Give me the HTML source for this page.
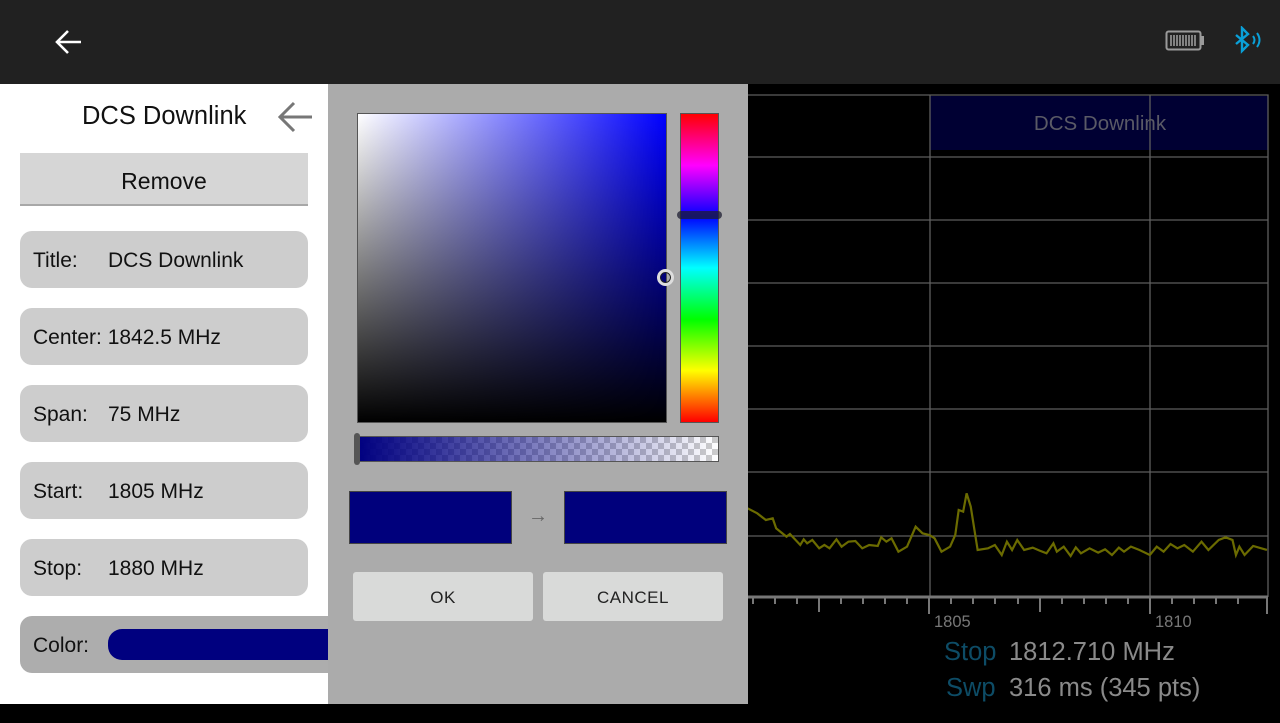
<!DOCTYPE html>
<html><head><meta charset="utf-8"><style>
*{margin:0;padding:0;box-sizing:border-box}
body{width:1280px;height:723px;background:#000;position:relative;overflow:hidden;font-family:"Liberation Sans",Roboto,sans-serif}
.abs{position:absolute}
.row{position:absolute;left:20px;width:288px;height:57px;background:#cdcdcd;border-radius:12px;font-size:21px;color:#111;line-height:59px}
.row .l{position:absolute;left:13px}
.row .v{position:absolute;left:88px}
.btn{position:absolute;background:#d9dad9;border-radius:3px;font-size:17px;color:#222;text-align:center;line-height:52px;letter-spacing:.5px}
</style></head><body>
<div class="abs" style="left:0;top:0;width:1280px;height:84px;background:#212121"></div>
<svg class="abs" style="left:50px;top:24px" width="36" height="36" viewBox="0 0 36 36"><path d="M7 18H31M18 7L7 18L18 29" stroke="#fff" stroke-width="2.6" fill="none"/></svg>
<svg class="abs" style="left:1160px;top:26px" width="110" height="32" viewBox="0 0 110 32">
<rect x="6.5" y="5.5" width="34" height="18" rx="2" fill="none" stroke="#9a9a9a" stroke-width="2"/><rect x="41" y="10" width="3" height="9" fill="#9a9a9a"/>
<g stroke="#9a9a9a" stroke-width="1.6"><path d="M11 9v11M14 9v11M17 9v11M20 9v11M23 9v11M26 9v11M29 9v11M32 9v11M35 9v11"/></g>
<path d="M76 9L88 19L82 25V2L88 8L76 18" stroke="#0aa0d8" stroke-width="2.4" fill="none"/>
<path d="M93 10q3 4 0 8M97 7q5 7 0 14" stroke="#0aa0d8" stroke-width="2" fill="none"/>
</svg>
<!-- left panel -->
<div class="abs" style="left:0;top:84px;width:328px;height:620px;background:#fff"></div>
<div class="abs" style="left:82px;top:102px;font-size:25.5px;color:#111">DCS Downlink</div>
<svg class="abs" style="left:276px;top:98px" width="38" height="38" viewBox="0 0 38 38"><path d="M4 19H36M18 5L4 19L18 33" stroke="#777" stroke-width="3" fill="none"/></svg>
<div class="abs" style="left:20px;top:153px;width:288px;height:53px;background:#d6d6d6;border-bottom:2px solid #a8a8a8;font-size:23px;text-align:center;line-height:56px;color:#111">Remove</div>
<div class="row" style="top:231px"><span class="l">Title:</span><span class="v">DCS Downlink</span></div>
<div class="row" style="top:308px"><span class="l">Center: 1842.5 MHz</span></div>
<div class="row" style="top:385px"><span class="l">Span:</span><span class="v">75 MHz</span></div>
<div class="row" style="top:462px"><span class="l">Start:</span><span class="v">1805 MHz</span></div>
<div class="row" style="top:539px"><span class="l">Stop:</span><span class="v">1880 MHz</span></div>
<div class="row" style="top:616px;background:#adadad;width:320px;border-radius:12px 0 0 12px"><span class="l">Color:</span><span class="abs" style="left:88px;top:13px;width:240px;height:31px;background:#00007f;border-radius:14px 0 0 14px"></span></div>
<!-- chart -->
<svg class="abs" style="left:748px;top:84px" width="532" height="620" viewBox="748 84 532 620">
<rect x="930" y="96" width="338" height="54" fill="#000033"/>
<text x="1100" y="130" text-anchor="middle" font-size="20.5" fill="#5a5a66" font-family="Liberation Sans,sans-serif">DCS Downlink</text>
<g stroke="#5e5e5e" stroke-width="1.3" fill="none">
<path d="M748 95H1268V597M748 157H1268M748 220H1268M748 283H1268M748 346H1268M748 409H1268M748 472H1268M748 536H1268M930 95V597M1150 95V597"/>
</g>
<path d="M748 597H1268" stroke="#777" stroke-width="3"/>
<g stroke="#777" stroke-width="2">
<path d="M753 597v7M775 597v7M797 597v7M841 597v7M863 597v7M885 597v7M907 597v7M951 597v7M973 597v7M995 597v7M1018 597v7M1062 597v7M1084 597v7M1106 597v7M1128 597v7M1172 597v7M1194 597v7M1216 597v7M1238 597v7"/>
<path d="M819 597v15M929 597v17M1040 597v15M1150 597v17M1267 597v17"/>
</g>
<text x="934" y="627" font-size="16.5" fill="#777" font-family="Liberation Sans,sans-serif">1805</text>
<text x="1155" y="627" font-size="16.5" fill="#777" font-family="Liberation Sans,sans-serif">1810</text>
<g transform="translate(740,480) scale(0.3444,0.3333)">
<polyline vector-effect="non-scaling-stroke" stroke="#6b6b00" stroke-width="2.2" fill="none" points="22,85 50,100 75,120 95,115 105,145 135,170 145,162 175,195 185,178 195,190 210,180 230,205 245,195 260,205 280,178 295,200 315,185 335,183 355,205 375,195 400,198 410,172 425,185 440,175 460,215 485,200 510,140 530,160 550,165 565,175 585,215 610,200 625,165 635,90 648,95 658,40 670,80 690,210 720,205 740,195 760,225 775,185 790,210 805,180 825,210 850,203 870,212 890,220 910,190 920,215 940,200 960,228 975,202 990,220 1015,205 1040,218 1060,208 1080,225 1100,203 1115,215 1135,200 1160,210 1190,225 1210,200 1230,215 1250,192 1270,205 1290,195 1315,215 1340,185 1360,210 1390,180 1410,172 1430,180 1440,225 1450,200 1465,225 1490,198 1530,210"/>
</g>
<g font-family="Liberation Sans,sans-serif" font-size="25.5">
<text x="944" y="660" fill="#0d4c66">Stop</text><text x="1009" y="660" fill="#8a8a8a">1812.710 MHz</text>
<text x="946" y="696" fill="#0d4c66">Swp</text><text x="1009" y="696" fill="#8a8a8a">316 ms (345 pts)</text>
</g>
</svg>
<!-- dialog -->
<div class="abs" style="left:328px;top:84px;width:420px;height:620px;background:#ababab"></div>
<div class="abs" style="left:357px;top:113px;width:310px;height:310px;border:1px solid #555;background:linear-gradient(to bottom,rgba(0,0,0,0),#000),linear-gradient(to right,#fff,#00f)"></div>
<div class="abs" style="left:680px;top:113px;width:39px;height:310px;border:1px solid #555;background:linear-gradient(to bottom,#f00,#f0f 16.7%,#00f 33.3%,#0ff 50%,#0f0 66.7%,#ff0 83.3%,#f00)"></div>
<div class="abs" style="left:677px;top:211px;width:45px;height:8px;border-radius:4px;background:rgba(30,30,50,.75)"></div>
<div class="abs" style="left:657px;top:269px;width:17px;height:17px;border-radius:50%;border:3px solid #ddd;box-shadow:inset 0 0 0 1px #222"></div>
<div class="abs" style="left:357px;top:436px;width:362px;height:26px;border:1px solid #555;background:linear-gradient(to right,#000080,rgba(0,0,128,0)),repeating-conic-gradient(#ccc 0 25%,#fff 0 50%) 0 0/12px 12px"></div>
<div class="abs" style="left:354px;top:433px;width:6px;height:32px;border-radius:3px;background:#555"></div>
<div class="abs" style="left:349px;top:491px;width:163px;height:53px;background:#00007c;border:1px solid #444"></div>
<div class="abs" style="left:528px;top:505px;font-size:20px;color:#666">→</div>
<div class="abs" style="left:564px;top:491px;width:163px;height:53px;background:#00007c;border:1px solid #444"></div>
<div class="btn" style="left:353px;top:572px;width:180px;height:49px">OK</div>
<div class="btn" style="left:543px;top:572px;width:180px;height:49px">CANCEL</div>
</body></html>
